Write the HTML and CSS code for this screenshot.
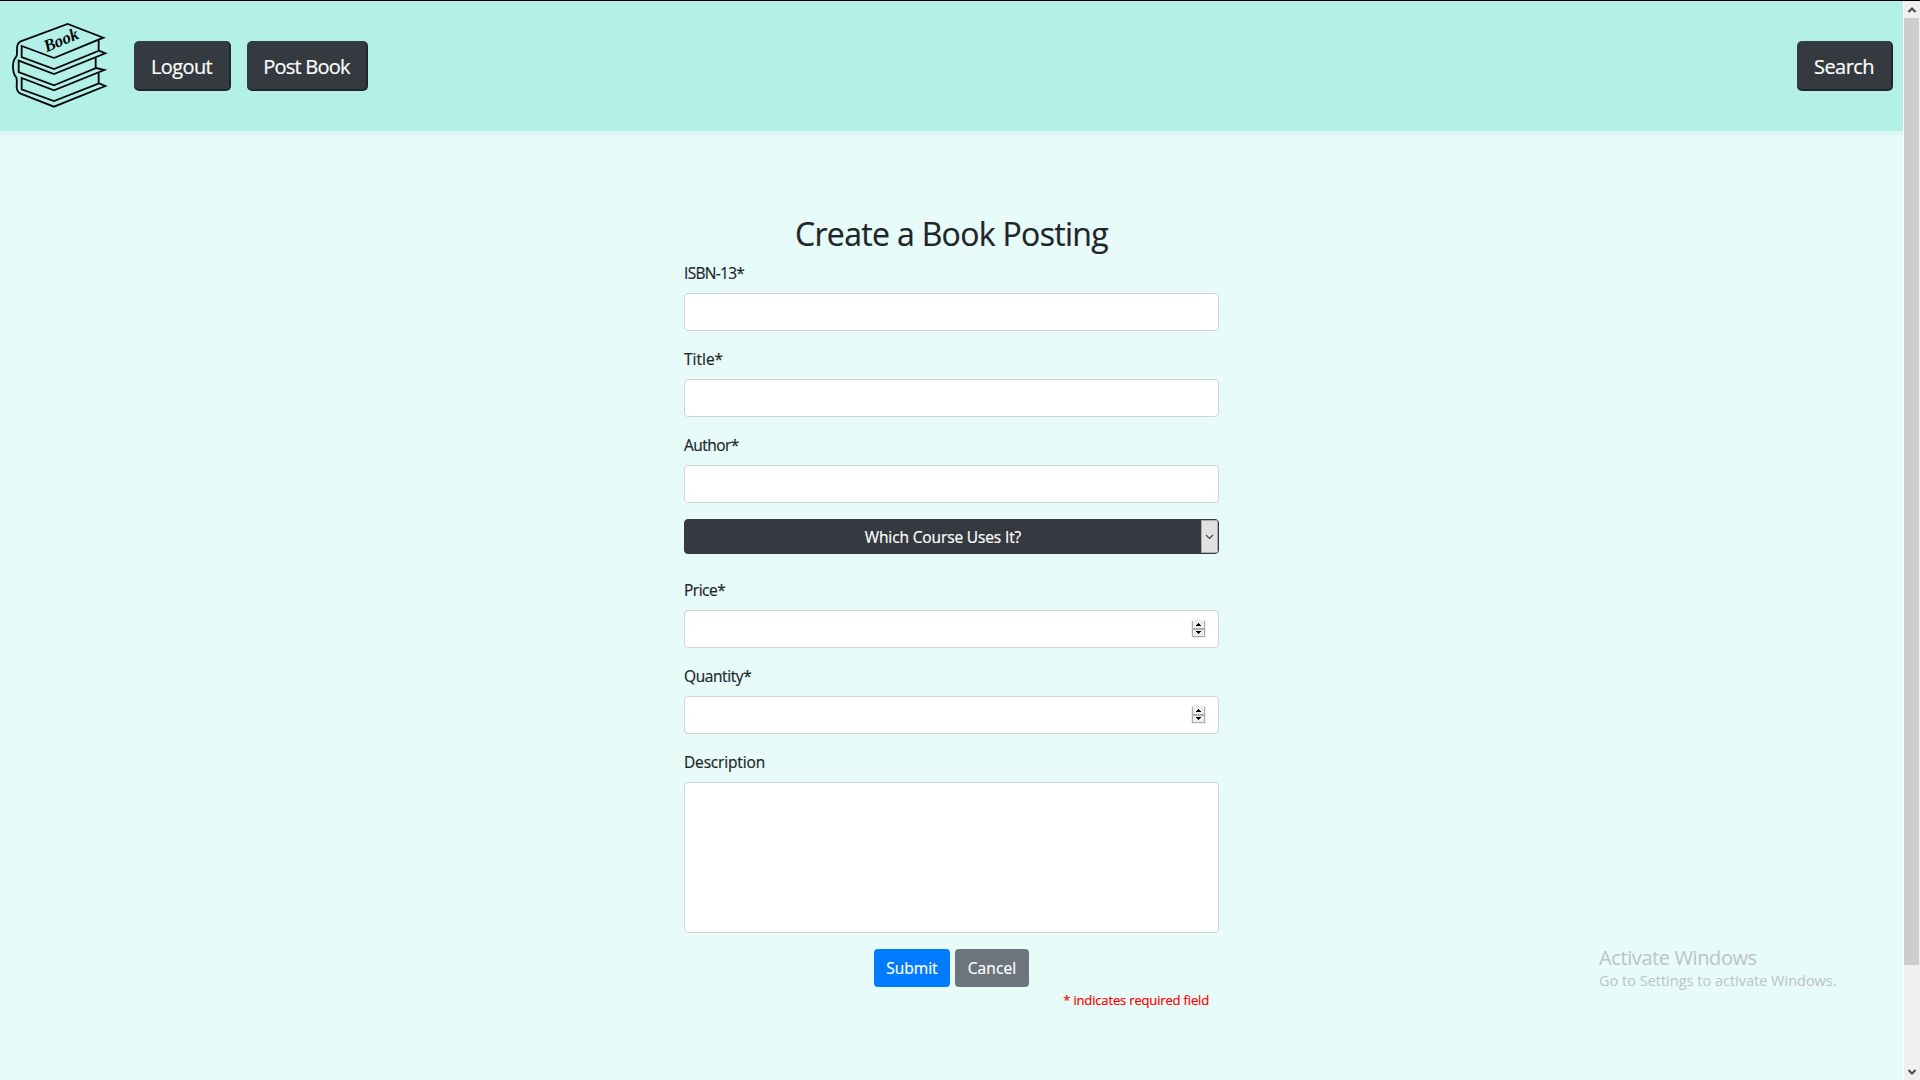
FILE: index.html
```html
<!DOCTYPE html>
<html lang="en">
<head>
<meta charset="utf-8">
<title>Create a Book Posting</title>
<link rel="stylesheet" href="styles.css">
</head>
<body>
<div class="page">
  <header class="navbar">
    <svg class="logo" viewBox="0 0 390 393" fill="none" stroke="#050808" stroke-width="5.500" stroke-linejoin="miter">
      <path d="M162 171L310 110L203 69L62 121Q49 127 51 150Q52 164 47 169Q38 180 39 199Q40 221 49 229Q52 240 50 257Q50 272 62 278L162 317L316 255L297 247"/>
      <path d="M162 171L65 135V168L162 204L297 149L316 157L162 219L56 179V213L162 253L289 201L313 207L162 268L65 231V265L162 300L297 247"/>
      <path d="M296 118V149M287 170V201M296 216V247"/>
      <text class="logo-text" transform="translate(140 154) rotate(-23)" textLength="108" lengthAdjust="spacingAndGlyphs">Book</text>
    </svg>
    <a class="nav-btn logout">Logout</a>
    <a class="nav-btn post">Post Book</a>
    <a class="nav-btn search">Search</a>
  </header>
  <main class="content">
    <form class="posting">
      <h2>Create a Book Posting</h2>
      <label class="isbn">ISBN-13*</label>
      <div class="field"></div>
      <label>Title*</label>
      <div class="field"></div>
      <label class="author">Author*</label>
      <div class="field"></div>
      <div class="course">
        <span class="course-text">Which Course Uses It?</span>
        <span class="course-arrow"><svg width="9" height="6" viewBox="0 0 9 6" fill="none" stroke="#444" stroke-width="1.2"><path d="M1 1L4.500 4.500L8 1"/></svg></span>
      </div>
      <label class="price">Price*</label>
      <div class="field number"><span class="spinner"><svg viewBox="0 0 15 18"><path fill="#adadad" d="M1 1H2V17H1ZM13 1H14V17H13ZM1 8H14V10H1ZM1 16H14V17H1Z"/><path d="M5 6H10V5H9V4H8V3H7V4H6V5H5ZM5 11H10V12H9V13H8V14H7V13H6V12H5Z"/></svg></span></div>
      <label class="quantity">Quantity*</label>
      <div class="field number"><span class="spinner"><svg viewBox="0 0 15 18"><path fill="#adadad" d="M1 1H2V17H1ZM13 1H14V17H13ZM1 8H14V10H1ZM1 16H14V17H1Z"/><path d="M5 6H10V5H9V4H8V3H7V4H6V5H5ZM5 11H10V12H9V13H8V14H7V13H6V12H5Z"/></svg></span></div>
      <label class="description">Description</label>
      <div class="field area"></div>
      <div class="actions">
        <a class="btn submit">Submit</a>
        <a class="btn cancel">Cancel</a>
      </div>
      <p class="required">* indicates required field</p>
    </form>
  </main>
</div>
<aside class="scrollbar">
  <svg class="arrow" viewBox="0 0 16 17" fill="none" stroke="#505050" stroke-width="2.200"><path d="M4.500 11L8 7.500L11.500 11"/></svg>
  <div class="track"><div class="thumb"></div></div>
  <svg class="arrow" viewBox="0 0 16 17" fill="none" stroke="#505050" stroke-width="2.200"><path d="M4.500 7L8 10.500L11.500 7"/></svg>
</aside>
<div class="watermark"><div>Activate Windows</div><div class="watermark-small">Go to Settings to activate Windows.</div></div>
</body>
</html>
```
FILE: styles.css
```css
* { box-sizing: border-box; }
body {
  margin: 0;
  height: 1080px;
  display: flex;
  overflow: hidden;
  border-top: 1px solid #000;
  background: #e7fbf9;
  color: #212529;
  font: 15.5px/24px "Open Sans", sans-serif;
  -webkit-text-stroke: 0.2px currentColor;
}
.page { width: 1903px; }
.navbar {
  height: 135px;
  display: flex;
  align-items: flex-start;
  background: #b2f0e8;
  border-bottom: 5px solid #dcf8f4;
}
.logo { width: 130px; height: 131px; margin-right: 4px; flex: none; }
.logo-text { font: italic bold 52px "Liberation Serif", serif; fill: #050808; stroke: none; }
.nav-btn {
  height: 50px;
  margin-top: 40px;
  padding-top: 3px;
  display: flex;
  justify-content: center;
  align-items: center;
  border-radius: 5px;
  border-right: 2px solid #23272b;
  border-bottom: 2px solid #23272b;
  background: #343a40;
  color: #fff;
  font-size: 20px;
}
.logout { width: 97px; margin-right: 16px; letter-spacing: -0.6px; }
.post { width: 121px; letter-spacing: -0.75px; }
.search { width: 96px; margin-left: auto; margin-right: 10px; letter-spacing: -0.55px; }
.content { padding-top: 78px; }
.posting { width: 535px; margin: 0 auto; }
h2 {
  margin: 0 0 8px;
  height: 39px;
  line-height: 40px;
  font-size: 32px;
  font-weight: 400;
  letter-spacing: -0.68px;
  text-align: center;
}
label { display: block; height: 24px; margin-bottom: 8px; }
.isbn { letter-spacing: -0.7px; }
.author { letter-spacing: -0.55px; }
.price { letter-spacing: -0.5px; }
.quantity { letter-spacing: -0.4px; }
.description { letter-spacing: -0.16px; }
.field {
  height: 38px;
  margin-bottom: 16px;
  background: #fff;
  border: 1px solid #ced4da;
  border-radius: 4px;
}
.number { display: flex; justify-content: flex-end; align-items: center; padding-right: 12px; }
.spinner { width: 15px; height: 18px; background: #eee; }
.spinner svg { display: block; }
.area { height: 151px; }
.course {
  height: 35px;
  margin-bottom: 24px;
  display: flex;
  border: 1px solid #343a40;
  border-radius: 4px;
  background: #343a40;
  color: #fff;
  overflow: hidden;
}
.course-text { flex: 1; line-height: 34px; text-align: center; letter-spacing: -0.13px; }
.course-arrow {
  width: 17px;
  display: flex;
  align-items: center;
  justify-content: center;
  background: #e1e1e1;
  border: 1px solid #adadad;
}
.actions { display: flex; justify-content: center; gap: 5px; }
.btn {
  height: 38px;
  line-height: 39px;
  text-align: center;
  color: #fff;
  border-radius: 4px;
}
.submit { width: 76px; background: #007bff; }
.cancel { width: 74px; background: #6c757d; letter-spacing: 0.1px; }
.required {
  margin: 3px 10px 0 0;
  text-align: right;
  color: #f00;
  font-size: 13px;
  line-height: 20px;
  letter-spacing: -0.16px;
}
.scrollbar {
  width: 17px;
  display: flex;
  flex-direction: column;
  background: #f0f0f0;
  border-left: 1px solid #fff;
}
.arrow { width: 16px; height: 17px; flex: none; }
.track { flex: 1; }
.thumb { width: 15px; height: 947px; background: #cdcdcd; }
.watermark {
  position: absolute;
  left: 1599px;
  top: 944px;
  color: #b9c4c3;
  font-size: 20px;
  line-height: 28px;
  letter-spacing: -0.4px;
  -webkit-text-stroke: 0;
}
.watermark-small { font-size: 14.5px; line-height: 18px; letter-spacing: 0; }
```
